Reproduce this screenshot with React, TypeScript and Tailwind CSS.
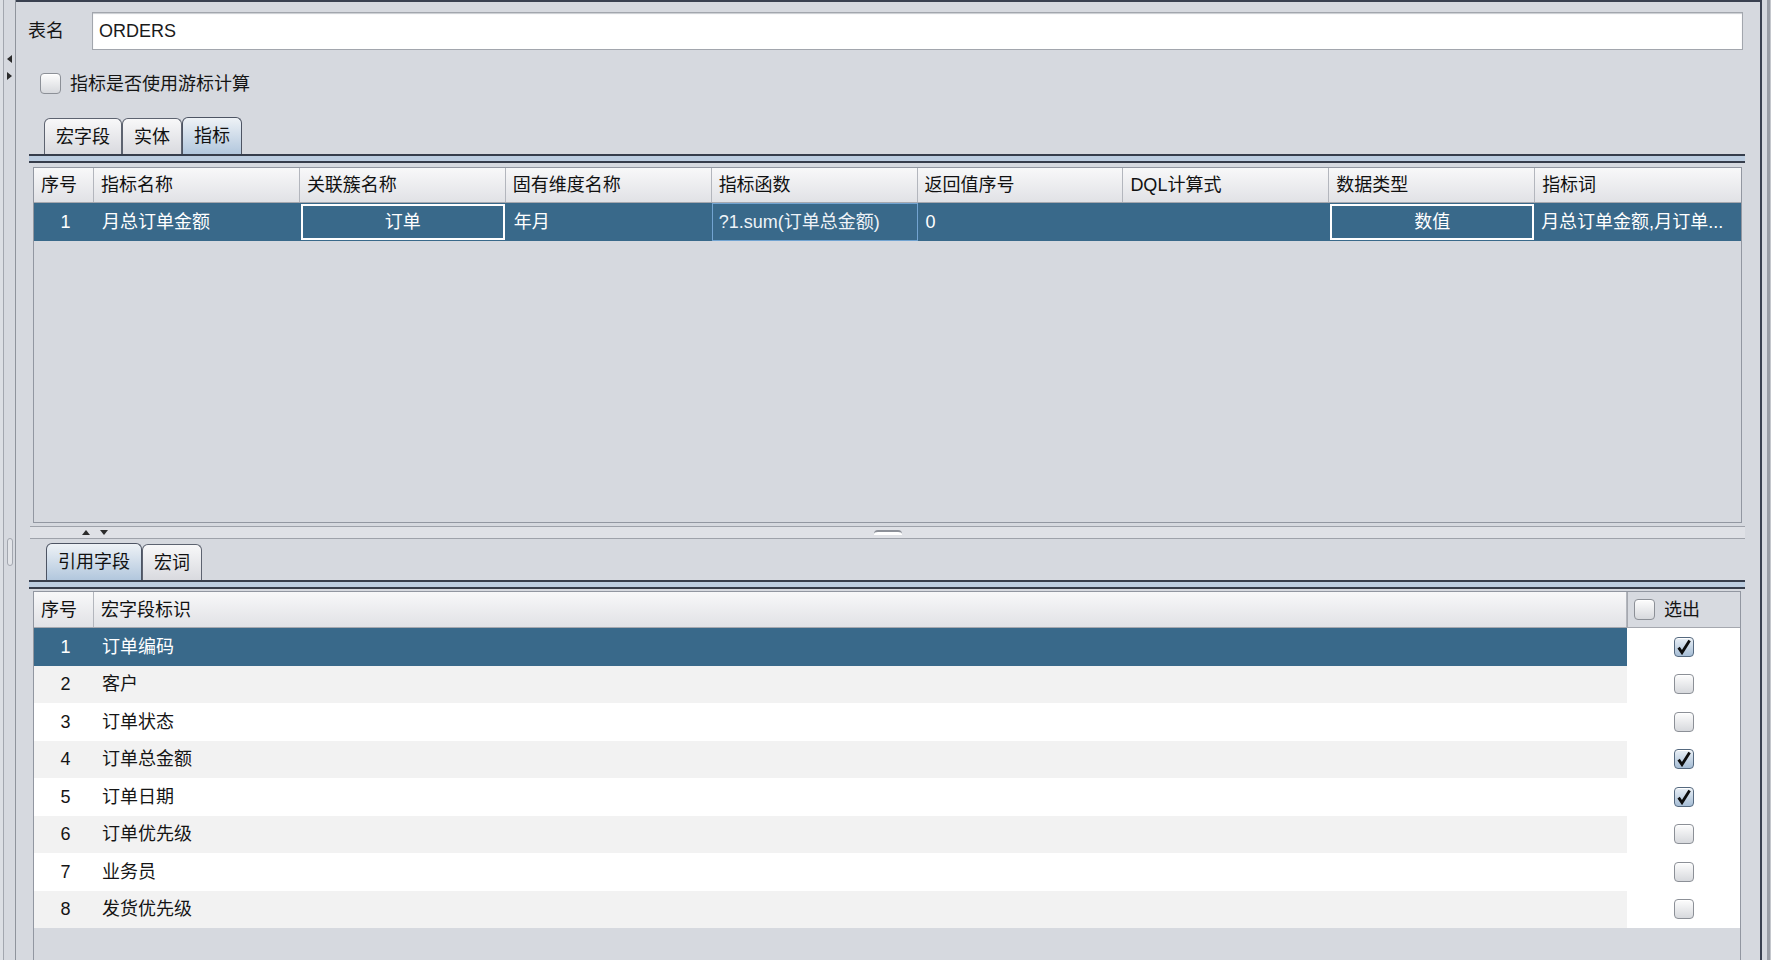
import React from "react";

const metricCols = [
  "指标名称",
  "关联簇名称",
  "固有维度名称",
  "指标函数",
  "返回值序号",
  "DQL计算式",
  "数据类型",
  "指标词",
];

const fields = [
  { name: "订单编码", checked: true },
  { name: "客户", checked: false },
  { name: "订单状态", checked: false },
  { name: "订单总金额", checked: true },
  { name: "订单日期", checked: true },
  { name: "订单优先级", checked: false },
  { name: "业务员", checked: false },
  { name: "发货优先级", checked: false },
];

function CheckBox({ checked, size = 20 }: { checked: boolean; size?: number }) {
  return (
    <div
      style={{ width: size, height: size }}
      className={
        checked
          ? "flex items-center justify-center rounded-[4px] border border-[#55697f] bg-linear-to-b from-[#eaf0f6] to-[#a6bdd5] shadow-[inset_0_1px_0_#ffffff]"
          : "flex items-center justify-center rounded-[4px] border border-[#8c9097] bg-linear-to-b from-[#fdfdfd] to-[#d7d9dd] shadow-[inset_0_1px_0_#ffffff]"
      }
    >
      {checked && (
        <svg width="16" height="16" viewBox="0 0 16 16">
          <path d="M2.6 8.6 L6 13.6 L13.6 1.4" fill="none" stroke="#0d0d0d" strokeWidth="2.8" strokeLinejoin="miter" strokeLinecap="butt" />
        </svg>
      )}
    </div>
  );
}

function Tab({ label, selected }: { label: string; selected?: boolean }) {
  return (
    <div
      className={
        selected
          ? "h-[37px] px-[11px] flex items-center rounded-t-[6px] border border-b-0 border-[#4d5463] bg-linear-to-b from-[#eef2f6] to-[#b2c7dd] text-[#111]"
          : "h-[36px] px-[11px] flex items-center rounded-t-[6px] border border-b-0 border-[#5d6370] bg-linear-to-b from-[#f8f8f9] to-[#d9dadf] text-[#111]"
      }
    >
      {label}
    </div>
  );
}

function TabBand() {
  return <div className="h-[9px] border-t-2 border-b-2 border-[#363d4b] bg-[#bccde0]" />;
}

function HeaderCell({ children, last }: { children?: React.ReactNode; last?: boolean }) {
  return (
    <div
      className={
        "h-full flex items-center px-[7px] bg-linear-to-b from-[#f8f8f9] to-[#e1e2e6] text-[#111] whitespace-nowrap " +
        (last ? "" : "border-r border-[#b3b6bd]")
      }
    >
      {children}
    </div>
  );
}

function UpDown() {
  return (
    <div className="flex items-center gap-[10px] pl-[52px]">
      <svg width="8" height="5" viewBox="0 0 8 5">
        <path d="M0 5 L4 0 L8 5 Z" fill="#2b2b2b" />
      </svg>
      <svg width="8" height="5" viewBox="0 0 8 5">
        <path d="M0 0 L8 0 L4 5 Z" fill="#2b2b2b" />
      </svg>
    </div>
  );
}

export default function App() {
  return (
    <div className="w-[1771px] h-[960px] bg-[#d6d9df] flex overflow-hidden text-[18px] leading-none font-['Liberation_Sans','Noto_Sans_CJK_SC',sans-serif] text-[#151515]">
      {/* collapsed side splitter */}
      <div className="w-[16px] h-full flex flex-none">
        <div className="w-[3px] h-full bg-[#dcdfe4]" />
        <div className="w-[1px] h-full bg-[#a3a7af]" />
        <div className="w-[11px] h-full flex flex-col items-center">
          <svg className="mt-[55px]" width="5" height="8" viewBox="0 0 5 8">
            <path d="M5 0 L0 4 L5 8 Z" fill="#2b2b2b" />
          </svg>
          <svg className="mt-[9px]" width="5" height="8" viewBox="0 0 5 8">
            <path d="M0 0 L5 4 L0 8 Z" fill="#2b2b2b" />
          </svg>
          <div className="mt-[458px] w-[6px] h-[28px] rounded-[3px] border border-[#a3a7af] bg-[#e2e4e8]" />
        </div>
        <div className="w-[1px] h-full bg-[#8f949c]" />
      </div>

      {/* main editor panel */}
      <div className="w-[1746px] h-full flex flex-col border-t-2 border-r-2 border-[#3a4150] flex-none">
        {/* table name */}
        <div className="mt-[10px] h-[38px] flex items-center pl-[12px] mr-[17px]">
          <div className="w-[64px] text-[#151515]">表名</div>
          <div className="flex-1 h-full border border-[#a2a6ad] bg-white shadow-[inset_0_1px_1px_#c9ccd1] flex items-center px-[6px] text-[#1a1a1a]">
            ORDERS
          </div>
        </div>

        {/* cursor option */}
        <div className="mt-[23px] h-[21px] flex items-center pl-[24px] gap-[9px]">
          <CheckBox checked={false} size={21} />
          <span>指标是否使用游标计算</span>
        </div>

        {/* upper tabbed pane */}
        <div className="mt-[23px] ml-[13px] mr-[15px]">
          <div className="h-[37px] flex items-end pl-[15px]">
            <Tab label="宏字段" />
            <Tab label="实体" />
            <Tab label="指标" selected />
          </div>
          <TabBand />
          <div className="mt-[4px] ml-[4px] mr-[3px] h-[356px] border border-[#9297a1] flex flex-col">
            <div className="grid grid-cols-[60px_repeat(8,minmax(0,1fr))] h-[35px] border-b border-[#a5a8af]">
              <HeaderCell>序号</HeaderCell>
              {metricCols.map((c, i) => (
                <HeaderCell key={c} last={i === metricCols.length - 1}>
                  {c}
                </HeaderCell>
              ))}
            </div>
            <div className="grid grid-cols-[60px_repeat(8,minmax(0,1fr))] h-[38px] bg-[#39698a] text-white">
              <div className="flex items-center justify-center pl-[3px]">1</div>
              <div className="flex items-center px-[8px]">月总订单金额</div>
              <div className="p-[1px]">
                <div className="h-full border-2 border-white flex items-center justify-center">订单</div>
              </div>
              <div className="flex items-center px-[8px]">年月</div>
              <div className="h-full border border-[#73a4d1] flex items-center px-[6px] text-[#eef3f8] whitespace-nowrap">
                ?1.sum(订单总金额)
              </div>
              <div className="flex items-center px-[8px]">0</div>
              <div />
              <div className="p-[1px]">
                <div className="h-full border-2 border-white flex items-center justify-center">数值</div>
              </div>
              <div className="flex items-center px-[6px] whitespace-nowrap overflow-hidden">月总订单金额,月订单...</div>
            </div>
            <div className="flex-1" />
          </div>
        </div>

        {/* split divider */}
        <div className="mt-[3px] ml-[14px] mr-[15px] h-[13px] border-t border-b border-[#9ea2aa] bg-[#dfe1e6] relative flex items-center">
          <UpDown />
          <div className="absolute left-1/2 top-[3px] -translate-x-1/2 w-[28px] h-[5px] rounded-t-[4px] border-t-2 border-[#8d9199] bg-white" />
        </div>

        {/* lower tabbed pane */}
        <div className="mt-[4px] ml-[13px] mr-[15px] flex-1 flex flex-col min-h-0">
          <div className="h-[37px] flex items-end pl-[17px]">
            <Tab label="引用字段" selected />
            <Tab label="宏词" />
          </div>
          <TabBand />
          <div className="mt-[2px] ml-[4px] mr-[4px] flex-1 border-t border-l border-r border-[#9297a1] flex flex-col min-h-0">
            <div className="grid grid-cols-[60px_minmax(0,1fr)_113px] h-[36px] border-b border-[#a5a8af]">
              <HeaderCell>序号</HeaderCell>
              <HeaderCell>宏字段标识</HeaderCell>
              <div className="h-full flex items-center pl-[6px] gap-[9px] bg-[#d7dae0] border-l border-[#a5a8af]">
                <CheckBox checked={false} size={21} />
                <span>选出</span>
              </div>
            </div>
            {fields.map((f, i) => {
              const selected = i === 0;
              const rowBg = selected ? "bg-[#39698a] text-white" : i % 2 === 1 ? "bg-[#f2f2f2]" : "bg-white";
              return (
                <div key={f.name} className="grid grid-cols-[60px_minmax(0,1fr)_113px] h-[37.5px]">
                  <div className={"flex items-center justify-center pl-[3px] " + rowBg}>{i + 1}</div>
                  <div className={"flex items-center px-[8px] " + rowBg}>{f.name}</div>
                  <div className="flex items-center justify-center bg-white">
                    <CheckBox checked={f.checked} />
                  </div>
                </div>
              );
            })}
            <div className="flex-1" />
          </div>
        </div>
      </div>

      {/* right edge */}
      <div className="w-[9px] h-full flex flex-none">
        <div className="w-[5px] h-full bg-[#d6d9df]" />
        <div className="w-[3px] h-full bg-[#9a9ea6]" />
        <div className="w-[1px] h-full bg-[#c4c7cd]" />
      </div>
    </div>
  );
}
